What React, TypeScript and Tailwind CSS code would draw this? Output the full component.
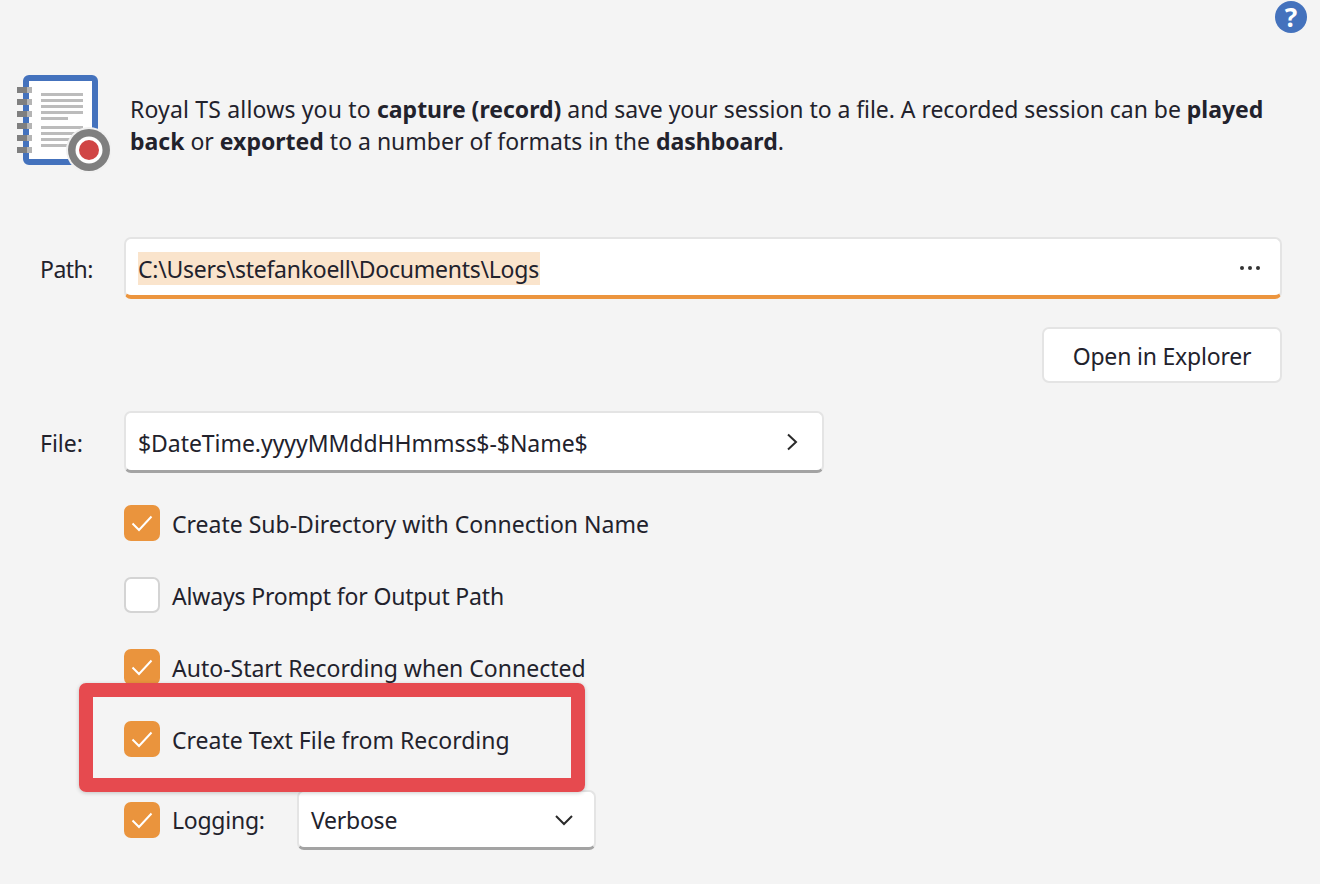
const Check = ({ on }: { on: boolean }) =>
  on ? (
    <span className="flex h-[36px] w-[36px] shrink-0 items-center justify-center rounded-[7px] bg-[#ea943d]">
      <svg width="24" height="24" viewBox="0 0 24 24" fill="none" stroke="#fff" strokeWidth="2">
        <path d="M2.5 12.5 L9 19 L21.5 5.5" />
      </svg>
    </span>
  ) : (
    <span className="h-[36px] w-[36px] shrink-0 rounded-[7px] border-2 border-[#d4d4d4] bg-white" />
  );

const Row = ({ on, label, cls, text = "" }: { on: boolean; label: string; cls: string; text?: string }) => (
  <div className={`flex items-center gap-[12px] ${cls}`}>
    <Check on={on} />
    <span className={`pt-[2px] ${text}`}>{label}</span>
  </div>
);

export default function App() {
  return (
    <div
      className="relative h-[884px] w-[1320px] overflow-hidden bg-[#f4f4f4] text-[23px] leading-[32px] text-[#22222c]"
      style={{ fontFamily: '"Noto Sans", "Open Sans", sans-serif' }}
    >
      <div className="flex justify-end pr-[13px] pt-[1px]">
        <span className="flex h-[32px] w-[32px] items-center justify-center rounded-full bg-[#4472bd] text-[26px] font-bold text-white">
          ?
        </span>
      </div>

      <div className="mt-[42px] flex h-[97px] pl-[15px]">
        <svg width="96" height="98" viewBox="15 75 96 98" className="shrink-0">
          <rect x="26" y="78" width="69" height="84" rx="3" fill="#fff" stroke="#4472bd" strokeWidth="6" />
          {[87, 99, 111, 123, 135, 147].map((y) => (
            <g key={y}>
              <rect x="17" y={y} width="10" height="6" fill="#7f7f7f" />
              <rect x="27" y={y} width="5" height="6" fill="#b4b4b4" />
            </g>
          ))}
          {[93, 99, 105, 111, 126, 132, 138, 144].map((y) => (
            <rect key={y} x="41" y={y} width="42" height="3" fill="#bcbcbc" />
          ))}
          <rect x="41" y="117" width="27" height="3" fill="#bcbcbc" />
          <circle cx="89" cy="150" r="23" fill="#f1f1f1" />
          <circle cx="89" cy="150" r="21" fill="#7f7f7f" />
          <circle cx="89" cy="150" r="13.5" fill="#fff" />
          <circle cx="89" cy="150" r="10" fill="#d04545" />
        </svg>
        <p className="ml-[19px] pt-[18px]">
          <span className="block whitespace-nowrap">
            <span className="tracking-[0.17px]">Royal TS allows you to </span>
            <b>capture (record)</b>
            <span className="tracking-[-0.05px]"> and save your session to a file. A recorded session can be </span>
            <b>played</b>
          </span>
          <span className="block whitespace-nowrap">
            <b>back</b> or <b>exported</b> to a number of formats in the <b>dashboard</b>.
          </span>
        </p>
      </div>

      <div className="mt-[65px] flex items-center pl-[40px]">
        <span className="w-[84px] pt-[2px] tracking-[-0.5px]">Path:</span>
        <div className="flex h-[62px] w-[1158px] items-center justify-between rounded-[7px] border-2 border-b-4 border-[#e4e4e4] border-b-[#ec953e] bg-white pl-[12px] pr-[19px]">
          <span className="translate-y-[1px] bg-[#fae4cc] pr-[1px] pt-[1px] tracking-[-0.25px]">C:\Users\stefankoell\Documents\Logs</span>
          <svg width="22" height="6" viewBox="0 0 22 6" fill="#333" className="translate-y-[1px]">
            <circle cx="3" cy="3" r="2" />
            <circle cx="11" cy="3" r="2" />
            <circle cx="19" cy="3" r="2" />
          </svg>
        </div>
      </div>

      <div className="mt-[28px] flex justify-end pr-[38px]">
        <button className="h-[56px] w-[240px] rounded-[7px] border-2 border-[#e4e4e4] bg-white pt-[2px] tracking-[-0.2px]">Open in Explorer</button>
      </div>

      <div className="mt-[28px] flex items-center pl-[40px]">
        <span className="w-[84px] pt-[2px]">File:</span>
        <div className="flex h-[62px] w-[700px] items-center justify-between rounded-[7px] border-2 border-b-[3px] border-[#e4e4e4] border-b-[#a3a3a3] bg-white pl-[12px] pr-[24px]">
          <span className="pt-[2px] tracking-[-0.05px]">$DateTime.yyyyMMddHHmmss$-$Name$</span>
          <svg width="12" height="18" viewBox="0 0 12 18" fill="none" stroke="#2a2a2a" strokeWidth="2">
            <path d="M2 1.5 L10 9 L2 16.5" />
          </svg>
        </div>
      </div>

      <div className="pl-[124px]">
        <Row on label="Create Sub-Directory with Connection Name" cls="mt-[32px]" />
        <Row on={false} label="Always Prompt for Output Path" cls="mt-[36px]" text="tracking-[-0.17px]" />
        <Row on label="Auto-Start Recording when Connected" cls="mt-[36px]" />
        <Row on label="Create Text File from Recording" cls="mt-[36px]" />
        <div className="mt-[33px] flex items-center">
          <Check on />
          <span className="ml-[12px] w-[125px] tracking-[-0.25px]">Logging:</span>
          <div className="flex h-[60px] w-[299px] items-center justify-between rounded-[7px] border-2 border-b-[3px] border-[#e4e4e4] border-b-[#a3a3a3] bg-white pl-[12px] pr-[20px]">
            <span className="tracking-[-0.25px]">Verbose</span>
            <svg width="20" height="12" viewBox="0 0 20 12" fill="none" stroke="#2a2a2a" strokeWidth="2">
              <path d="M2 2 L10 10 L18 2" />
            </svg>
          </div>
        </div>
      </div>

      <div className="absolute left-[79px] top-[683px] h-[109px] w-[506px] rounded-[7px] border-[14px] border-[#e64a4f] shadow-[0_1px_4px_rgba(0,0,0,0.2)]" />
    </div>
  );
}
